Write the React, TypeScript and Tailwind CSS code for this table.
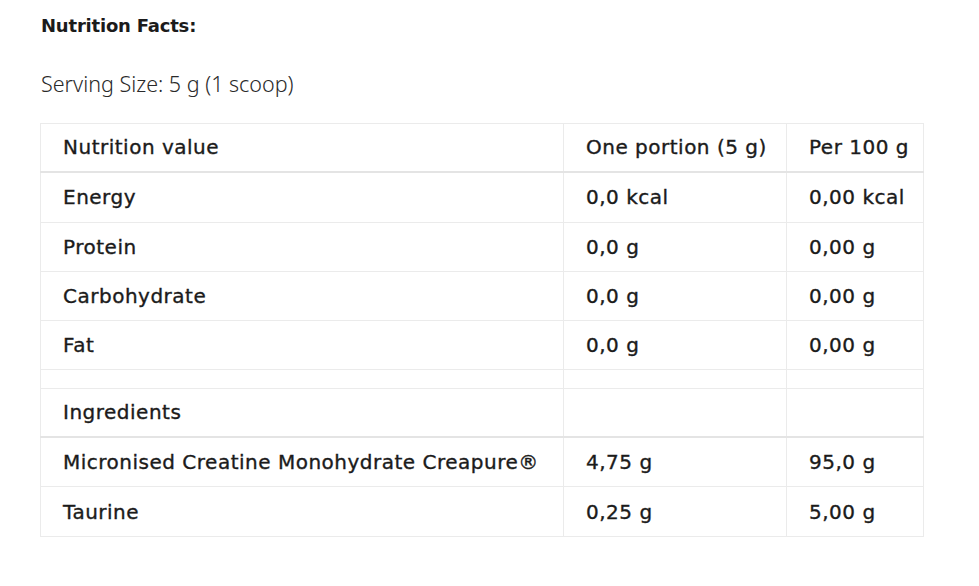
import React from "react";

const rows: { name: string; a: string; b: string; h: string; thick?: boolean }[] = [
  { name: "Energy", a: "0,0 kcal", b: "0,00 kcal", h: "h-[51px]" },
  { name: "Protein", a: "0,0 g", b: "0,00 g", h: "h-[49px]" },
  { name: "Carbohydrate", a: "0,0 g", b: "0,00 g", h: "h-[49px]" },
  { name: "Fat", a: "0,0 g", b: "0,00 g", h: "h-[49px]" },
  { name: "", a: "", b: "", h: "h-[19px]" },
  { name: "Ingredients", a: "", b: "", h: "h-[48px]", thick: true },
  { name: "Micronised Creatine Monohydrate Creapure®", a: "4,75 g", b: "95,0 g", h: "h-[50px]" },
  { name: "Taurine", a: "0,25 g", b: "5,00 g", h: "h-[50px]" },
];

function Cell({ children, thick }: { children: React.ReactNode; thick?: boolean }) {
  return (
    <td
      className={
        thick
          ? "border border-[#ebebeb] border-b-2 border-b-[#e4e4e4] pl-[22px] p-0"
          : "border border-[#ebebeb] pl-[22px] p-0"
      }
    >
      {children}
    </td>
  );
}

export default function App() {
  return (
    <div className="w-[979px] h-[586px] bg-white text-[#1b1b1b] font-['DejaVu_Sans',sans-serif]">
      <div className="pl-[41px] pt-[14px]">
        <div className="text-[18px] font-bold leading-[24px] tracking-[-0.2px]">Nutrition Facts:</div>
        <div className="mt-[31px] font-['Noto_Sans',sans-serif] text-[21.5px] font-light leading-[30px] text-[#2a2a2a]">
          Serving Size: 5 g (1 scoop)
        </div>
      </div>
      <table className="ml-[40px] mt-[24px] w-[883px] table-fixed border-collapse text-[20px] tracking-[0.5px] [-webkit-text-stroke-width:0.35px]">
        <colgroup>
          <col className="w-[523px]" />
          <col className="w-[223px]" />
          <col className="w-[137px]" />
        </colgroup>
        <thead>
          <tr className="h-[48px]">
            <Cell thick>Nutrition value</Cell>
            <Cell thick>One portion (5 g)</Cell>
            <Cell thick>Per 100 g</Cell>
          </tr>
        </thead>
        <tbody>
          {rows.map((r, i) => (
            <tr key={i} className={r.h}>
              <Cell thick={r.thick}>{r.name}</Cell>
              <Cell thick={r.thick}>{r.a}</Cell>
              <Cell thick={r.thick}>{r.b}</Cell>
            </tr>
          ))}
        </tbody>
      </table>
    </div>
  );
}
